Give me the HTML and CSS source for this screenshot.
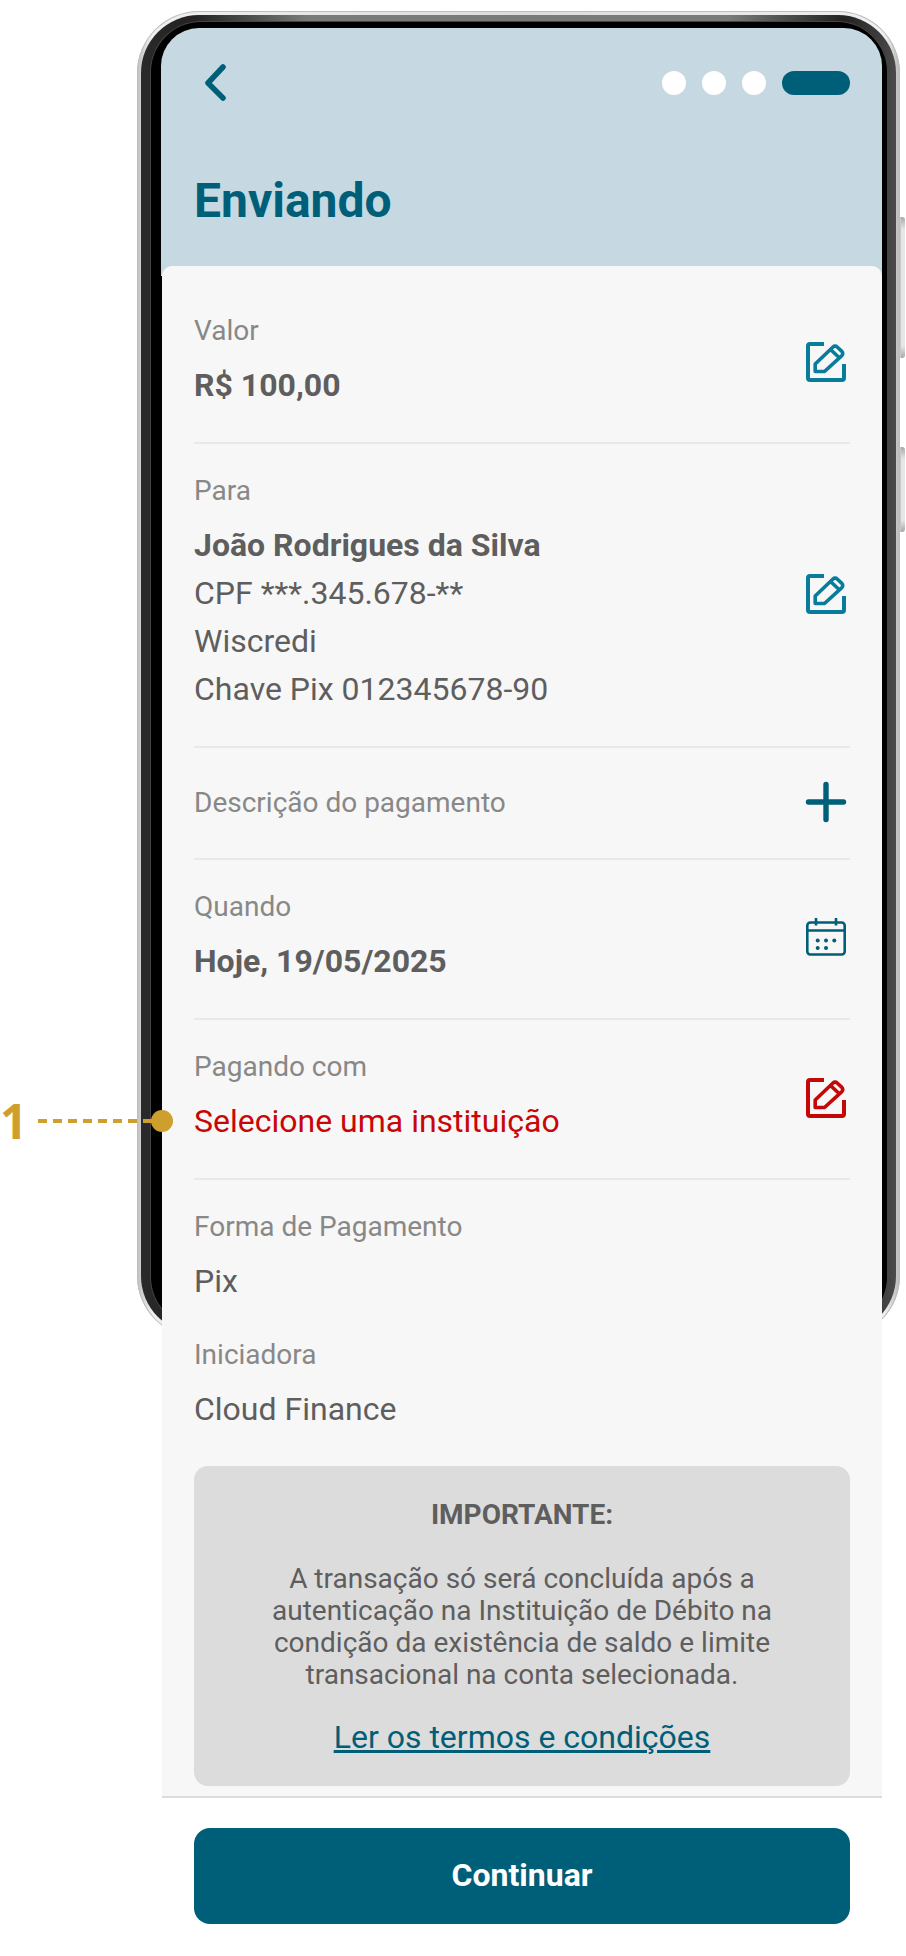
FILE: index.html
```html
<!DOCTYPE html>
<html lang="pt-BR">
<head>
<meta charset="utf-8">
<title>Enviando</title>
<link rel="stylesheet" href="styles.css">
</head>
<body>
<div class="page">
  <div class="phone"><div class="bezel"></div></div>
  <div class="side-btn side-btn-a"></div>
  <div class="side-btn side-btn-b"></div>

  <main class="screen">
    <header class="header">
      <div class="nav">
        <svg class="back" viewBox="0 0 32 40" aria-hidden="true"><path d="M29 4 14 20l15 15" /></svg>
        <div class="steps"><span class="dot"></span><span class="dot"></span><span class="dot"></span><span class="pill"></span></div>
      </div>
      <h1 class="title">Enviando</h1>
    </header>

    <section class="content">
      <div class="row row-first">
        <div class="field">
          <div class="label">Valor</div>
          <div class="value strong">R$ 100,00</div>
        </div>
        <svg class="icon edit" viewBox="0 0 48 48" aria-hidden="true"><path class="box" d="M22 6H8a2 2 0 0 0-2 2v32a2 2 0 0 0 2 2h32a2 2 0 0 0 2-2V26"/><path class="pen" d="M13.200 33.500V26L31 9a3 3 0 0 1 4.200 0l4.700 4.400a3 3 0 0 1 0 4.200L22.500 33.500ZM28.500 11.500l8 7.500"/></svg>
      </div>
      <div class="row">
        <div class="field">
          <div class="label">Para</div>
          <div class="value strong">João Rodrigues da Silva</div>
          <div class="value">CPF ***.345.678-**</div>
          <div class="value">Wiscredi</div>
          <div class="value">Chave Pix 012345678-90</div>
        </div>
        <svg class="icon edit" viewBox="0 0 48 48" aria-hidden="true"><path class="box" d="M22 6H8a2 2 0 0 0-2 2v32a2 2 0 0 0 2 2h32a2 2 0 0 0 2-2V26"/><path class="pen" d="M13.200 33.500V26L31 9a3 3 0 0 1 4.200 0l4.700 4.400a3 3 0 0 1 0 4.200L22.500 33.500ZM28.500 11.500l8 7.500"/></svg>
      </div>
      <div class="row row-single">
        <div class="label label-single">Descrição do pagamento</div>
        <svg class="icon plus" viewBox="0 0 48 48" aria-hidden="true"><path d="M6.500 24h35M24 6.500v35"/></svg>
      </div>
      <div class="row">
        <div class="field">
          <div class="label">Quando</div>
          <div class="value strong">Hoje, 19/05/2025</div>
        </div>
        <svg class="icon calendar" viewBox="0 0 48 48" aria-hidden="true"><rect x="5.300" y="8.500" width="37.400" height="32" rx="3"/><path d="M5.300 16.500h37.400M14 4v7.500M34 4v7.500"/><g class="dots"><circle cx="15.700" cy="26.500" r="2"/><circle cx="24" cy="26.500" r="2"/><circle cx="32.300" cy="26.500" r="2"/><circle cx="15.700" cy="34" r="2"/><circle cx="24" cy="34" r="2"/></g></svg>
      </div>
      <div class="row">
        <div class="field">
          <div class="label">Pagando com</div>
          <div class="value error">Selecione uma instituição</div>
        </div>
        <svg class="icon edit edit-error" viewBox="0 0 48 48" aria-hidden="true"><path class="box" d="M22 6H8a2 2 0 0 0-2 2v32a2 2 0 0 0 2 2h32a2 2 0 0 0 2-2V26"/><path class="pen" d="M13.200 33.500V26L31 9a3 3 0 0 1 4.200 0l4.700 4.400a3 3 0 0 1 0 4.200L22.500 33.500ZM28.500 11.500l8 7.500"/></svg>
      </div>
      <div class="info">
        <div class="field">
          <div class="label">Forma de Pagamento</div>
          <div class="value">Pix</div>
        </div>
        <div class="field">
          <div class="label">Iniciadora</div>
          <div class="value">Cloud Finance</div>
        </div>
      </div>
      <div class="notice">
        <div class="notice-title">IMPORTANTE:</div>
        <p class="notice-text">A transação só será concluída após a<br>autenticação na Instituição de Débito na<br>condição da existência de saldo e limite<br>transacional na conta selecionada.</p>
        <a class="notice-link" href="#">Ler os termos e condições</a>
      </div>
    </section>

    <footer class="footer">
      <button class="cta" type="button">Continuar</button>
    </footer>
  </main>

  <div class="callout">
    <span class="callout-num">1</span>
    <span class="callout-line"></span>
    <span class="callout-dot"></span>
  </div>
</div>
</body>
</html>
```
FILE: styles.css
```css
* { box-sizing: border-box; }
html, body { margin: 0; padding: 0; background: #fff; }
.page {
  position: relative;
  width: 906px;
  height: 1956px;
  overflow: hidden;
  font-family: Roboto, "Liberation Sans", sans-serif;
}

/* device frame behind the screen */
.phone {
  position: absolute;
  left: 137px;
  top: 11px;
  width: 763px;
  height: 1327px;
  padding: 4px;
  border-radius: 62px;
  background: linear-gradient(90deg, #c0c0c0, #f0f0f0 2%, #dcdcdc 50%, #f0f0f0 98%, #b8b8b8);
  box-shadow: inset 0 0 0 1px #bdbdbd;
}
.bezel {
  position: relative;
  width: 100%;
  height: 100%;
  border-radius: 58px;
  background: linear-gradient(90deg, #2a2a2a, #222 7%, #7a7a7a 22%, #7a7a7a 78%, #222 93%, #4a4a4a);
}
.bezel::before {
  content: "";
  position: absolute;
  inset: 7px 9px 7px 10px;
  border-radius: 50px;
  background: #000;
  box-shadow: 0 0 0 1px #444;
}
.side-btn {
  position: absolute;
  left: 900px;
  width: 5px;
  border-left: 1px solid #c8c8c8;
  border-radius: 0 3px 3px 0;
  background: linear-gradient(180deg, #a8a8a8, #e6e6e6 12px, #e6e6e6 calc(100% - 12px), #a8a8a8);
}
.side-btn-a { top: 217px; height: 141px; }
.side-btn-b { top: 447px; height: 85px; }

.screen {
  position: relative;
  width: 720px;
  margin-left: 162px;
  padding-top: 28px;
}
.header {
  height: 248px;
  margin-left: -1px;
  margin-bottom: -10px;
  padding: 43px 32px 0 33px;
  background: #c6d9e2;
  border-radius: 38px 38px 0 0;
}
.nav {
  display: flex;
  align-items: center;
  justify-content: space-between;
  height: 24px;
}
.back {
  width: 32px;
  height: 40px;
  fill: none;
  stroke: #005f78;
  stroke-width: 5.500px;
  stroke-linecap: round;
  stroke-linejoin: round;
}
.steps { display: flex; gap: 16px; }
.dot { width: 24px; height: 24px; border-radius: 50%; background: #fff; }
.pill { width: 68px; height: 24px; border-radius: 12px; background: #005f78; }
.title {
  margin: 78px 0 0;
  font-size: 48px;
  line-height: 56px;
  font-weight: 700;
  color: #005f78;
}

.content {
  position: relative;
  padding: 0 32px 10px;
  background: #f7f7f7;
  border-radius: 10px 10px 0 0;
  border-bottom: 2px solid #dcdcdc;
}
.row {
  display: flex;
  align-items: center;
  justify-content: space-between;
  padding: 26px 0 33px;
  border-bottom: 2px solid #e8e8e8;
}
.row-first { padding-top: 44px; }
.row-single { padding: 30px 0 32px; }
.label {
  padding-top: 1px;
  font-size: 28px;
  line-height: 40px;
  color: #888;
}
.label-single { padding-top: 2px; }
.value {
  font-size: 32px;
  line-height: 48px;
  color: #5e5e5e;
}
.label + .value { margin-top: 10px; }
.strong { font-weight: 700; }
.error { color: #c90606; }

.icon {
  flex: none;
  width: 48px;
  height: 48px;
  fill: none;
}
.edit, .calendar { margin-top: 5px; }
.edit { stroke: #097c9b; }
.edit .box { stroke-width: 4px; }
.edit .pen { stroke-width: 3.600px; stroke-linejoin: round; }
.edit-error { stroke: #c40808; }
.plus { stroke: #005f78; stroke-width: 5.400px; stroke-linecap: round; }
.calendar { stroke: #005f78; stroke-width: 2.600px; }
.calendar .dots { fill: #005f78; stroke: none; }

.info {
  display: flex;
  flex-direction: column;
  gap: 29px;
  padding-top: 26px;
}
.notice {
  height: 320px;
  margin-top: 33px;
  padding-top: 30px;
  border-radius: 14px;
  background: #dcdcdc;
  text-align: center;
  color: #5e5e5e;
}
.notice-title {
  font-size: 28px;
  line-height: 38px;
  font-weight: 700;
}
.notice-text {
  margin: 29px 0 0;
  font-size: 28px;
  line-height: 32px;
}
.notice-link {
  display: inline-block;
  margin-top: 26px;
  font-size: 32px;
  line-height: 40px;
  color: #005f78;
  text-decoration: underline;
}

.footer { padding: 30px 32px 0; }
.cta {
  display: block;
  width: 100%;
  height: 96px;
  padding: 0 0 2px;
  border: 0;
  border-radius: 16px;
  background: #005f78;
  color: #fff;
  font-family: inherit;
  font-size: 32px;
  font-weight: 700;
}

/* annotation laid over the page */
.callout {
  position: absolute;
  left: 0;
  top: 1097px;
  width: 173px;
  height: 48px;
  color: #cf9f2e;
}
.callout-num {
  position: absolute;
  left: 0;
  top: 0;
  font-size: 48px;
  line-height: 48px;
  font-weight: 700;
  font-family: "Open Sans", sans-serif;
}
.callout-line {
  position: absolute;
  left: 38px;
  top: 22px;
  width: 118px;
  height: 4px;
  background: repeating-linear-gradient(90deg, #cf9f2e 0 9px, transparent 9px 15px);
}
.callout-dot {
  position: absolute;
  left: 151px;
  top: 13px;
  width: 22px;
  height: 22px;
  border-radius: 50%;
  background: #cf9f2e;
}
```
